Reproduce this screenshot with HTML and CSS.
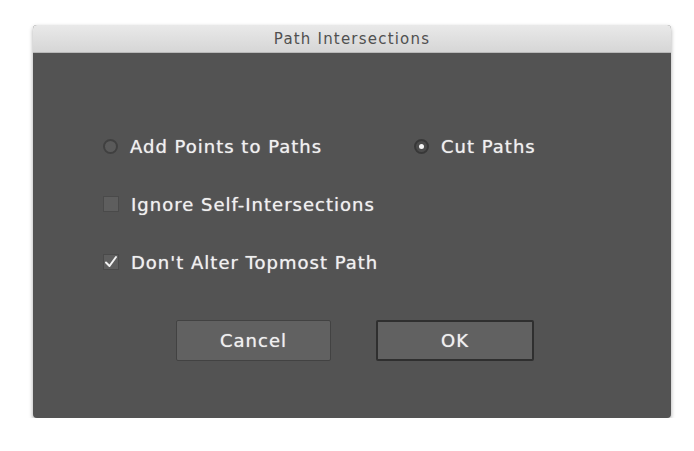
FILE: index.html
```html
<!DOCTYPE html>
<html lang="en">

<head>
    <meta charset="UTF-8">
    <title>Path Intersections</title>
    <link rel="stylesheet" href="styles.css">
</head>

<body>
    <div class="dialog">
        <div class="title-bar">Path Intersections</div>

        <div class="dialog-body">
            <div class="row">
                <label class="option first">
                    <span class="radio"></span>
                    <span>Add Points to Paths</span>
                </label>
                <label class="option">
                    <span class="radio checked"></span>
                    <span>Cut Paths</span>
                </label>
            </div>

            <div class="row">
                <label class="option">
                    <span class="checkbox"></span>
                    <span>Ignore Self-Intersections</span>
                </label>
            </div>

            <div class="row">
                <label class="option">
                    <span class="checkbox checked">
                        <svg width="14" height="14" viewBox="0 0 14 14">
                            <path d="M2 7.5 L5.5 11 L12 2" fill="none" stroke="#f2f2f2" stroke-width="2" stroke-linecap="round" stroke-linejoin="round" />
                        </svg>
                    </span>
                    <span>Don't Alter Topmost Path</span>
                </label>
            </div>

            <div class="buttons">
                <button class="btn">Cancel</button>
                <button class="btn default">OK</button>
            </div>
        </div>
    </div>
</body>

</html>
```

FILE: styles.css
```css
body {
    margin: 0;
    background-color: #fff;
    font-family: "DejaVu Sans", Verdana, sans-serif;
}

.dialog {
    margin: 25px 0 0 33px;
    width: 638px;
    border-radius: 4px;
    overflow: hidden;
    background-color: #535353;
    box-shadow: 0 2px 4px rgba(0, 0, 0, 0.35);
}

.title-bar {
    height: 27px;
    line-height: 28px;
    text-align: center;
    font-size: 15px;
    letter-spacing: 1.2px;
    color: #505050;
    background: linear-gradient(#e9e9e9, #d6d6d6);
    border-bottom: 1px solid #b8b8b8;
}

.dialog-body {
    height: 365px;
    padding: 78px 0 0 70px;
    box-sizing: border-box;
}

.row {
    display: flex;
    align-items: center;
    height: 30px;
    margin-bottom: 28px;
}

.option {
    display: flex;
    align-items: center;
    gap: 12px;
    font-size: 18px;
    letter-spacing: 1px;
    color: #f0f0f0;
    text-shadow: 0 0 1px rgba(255, 255, 255, 0.7);
}

.option.first {
    width: 311px;
}

.radio {
    width: 15px;
    height: 15px;
    border-radius: 50%;
    background-color: #5a5a5a;
    border: 2px solid #404040;
    box-sizing: border-box;
    display: flex;
    align-items: center;
    justify-content: center;
}

.radio.checked {
    background-color: #4c4c4c;
    border-color: #383838;
}

.radio.checked::after {
    content: "";
    width: 5px;
    height: 5px;
    border-radius: 50%;
    background-color: #f5f5f5;
}

.checkbox {
    width: 16px;
    height: 16px;
    background-color: #5e5e5e;
    border: 1px solid #4a4a4a;
    box-sizing: border-box;
    display: flex;
    align-items: center;
    justify-content: center;
}

.buttons {
    display: flex;
    gap: 45px;
    padding-left: 73px;
    margin-top: 43px;
}

.btn {
    width: 155px;
    height: 41px;
    font-family: inherit;
    font-size: 18px;
    letter-spacing: 1px;
    color: #f0f0f0;
    text-shadow: 0 0 1px rgba(255, 255, 255, 0.7);
    background-color: #616161;
    border: 1px solid #424242;
    border-radius: 2px;
}

.btn.default {
    width: 158px;
    border: 2px solid #2f2f2f;
}
```
